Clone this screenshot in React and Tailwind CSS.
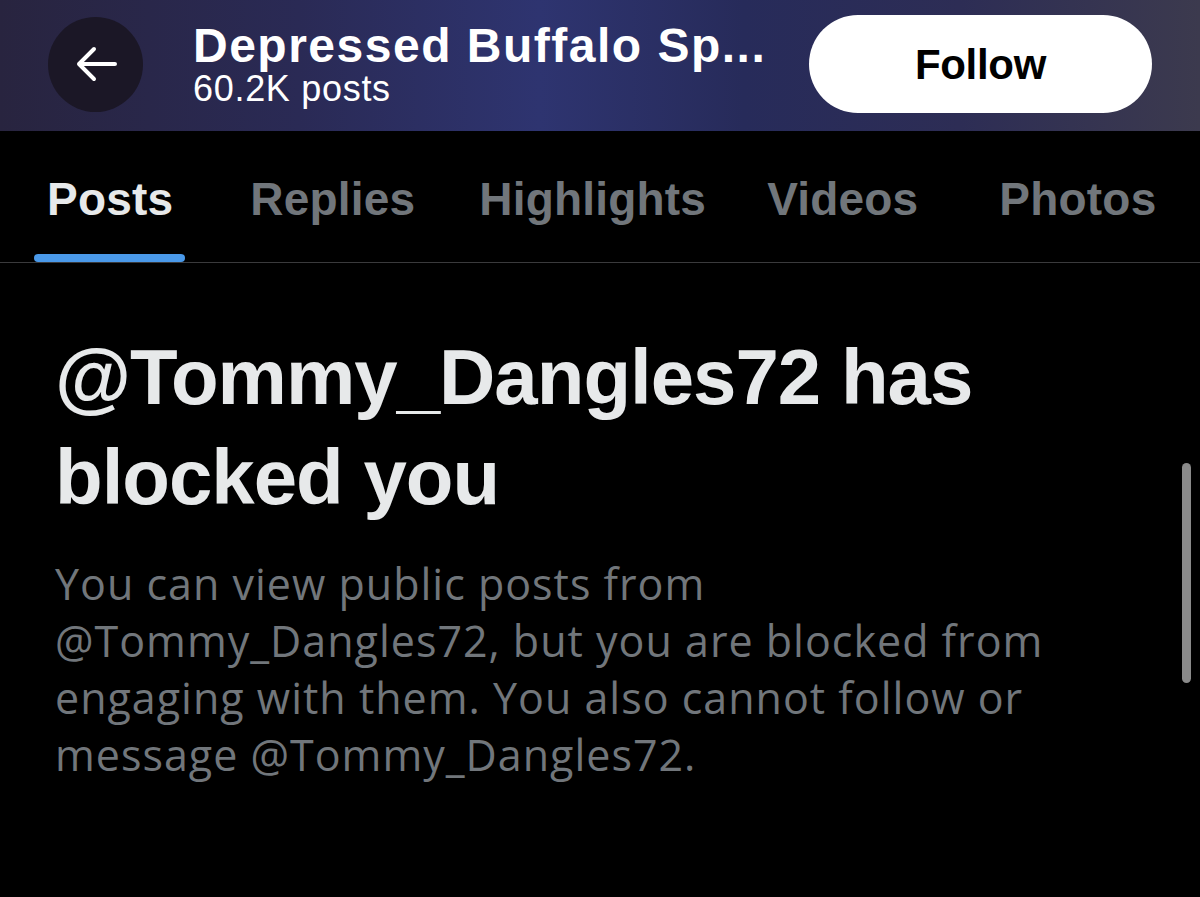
export default function App() {
  return (
    <div
      className="relative w-[1200px] h-[897px] bg-black overflow-hidden"
      style={{ fontFamily: '"Liberation Sans", Arial, sans-serif' }}
    >
      {/* Header */}
      <div className="h-[131px] flex items-center pl-[48px] pr-[48px] bg-[linear-gradient(90deg,#28243f_0%,#2a2a55_25%,#2e3470_45%,#272b5a_62%,#2d2d55_80%,#3c3a4e_100%)]">
        <div className="w-[95px] h-[95px] rounded-full bg-[#1b1726] flex items-center justify-center shrink-0 -mt-[3px]">
          <svg width="42" height="36" viewBox="0 0 42 36" fill="none">
            <path d="M40 18H4M19 3L4 18l15 15" stroke="white" strokeWidth="4" strokeLinecap="round" strokeLinejoin="round" />
          </svg>
        </div>
        <div className="ml-[50px] flex flex-col -mt-[1px]">
          <div className="text-white font-bold text-[48px] leading-[48px] tracking-[1.5px] whitespace-nowrap">
            Depressed Buffalo Sp...
          </div>
          <div className="text-white text-[36px] leading-[38px] tracking-[0.7px] whitespace-nowrap">60.2K posts</div>
        </div>
        <div className="ml-auto w-[343px] h-[98px] rounded-full bg-white flex items-center justify-center -mt-[3px]">
          <span className="text-black font-bold text-[42px] tracking-[-0.3px]">Follow</span>
        </div>
      </div>

      {/* Tabs */}
      <div className="relative h-[132px] border-b border-[#3a3a3c] flex items-start pt-[40px]">
        <div className="relative ml-[47px] text-[46px] font-bold leading-[56px] text-[#e7e9ea] tracking-[0.2px]">
          Posts
          <div className="absolute left-[-13px] top-[83px] w-[151px] h-[8px] rounded-full bg-[#4a99e9]" />
        </div>
        <div className="ml-[77px] text-[46px] font-bold leading-[56px] text-[#71767b] tracking-[0.2px]">Replies</div>
        <div className="ml-[64px] text-[46px] font-bold leading-[56px] text-[#71767b] tracking-[0.2px]">Highlights</div>
        <div className="ml-[61px] text-[46px] font-bold leading-[56px] text-[#71767b] tracking-[0.2px]">Videos</div>
        <div className="ml-[81px] text-[46px] font-bold leading-[56px] text-[#71767b] tracking-[0.2px]">Photos</div>
      </div>

      {/* Content */}
      <div className="pl-[55px] pt-[64px]">
        <h1 className="text-[#e7e9ea] font-bold text-[78px] leading-[100px] tracking-[-1px] whitespace-nowrap">
          @Tommy_Dangles72 has
          <br />
          blocked you
        </h1>
        <p
          className="mt-[28px] text-[#71767b] text-[43px] leading-[57px] tracking-[1px] whitespace-nowrap"
          style={{ fontFamily: '"Open Sans", "Liberation Sans", sans-serif' }}
        >
          You can view public posts from
          <br />
          @Tommy_Dangles72, but you are blocked from
          <br />
          engaging with them. You also cannot follow or
          <br />
          message @Tommy_Dangles72.
        </p>
      </div>

      {/* Scrollbar */}
      <div className="absolute left-[1182px] top-[463px] w-[9px] h-[220px] rounded-full bg-[#8a8a8a]" />
    </div>
  );
}
